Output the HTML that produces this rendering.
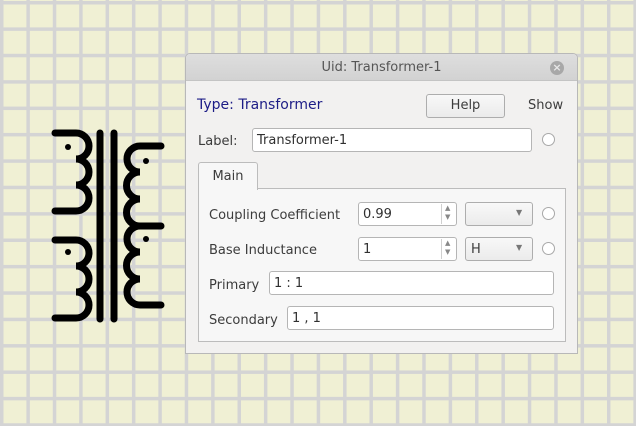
<!DOCTYPE html>
<html><head><style>
*{box-sizing:border-box;margin:0;padding:0}
body{width:636px;height:426px;overflow:hidden;position:relative;font-family:"DejaVu Sans","Liberation Sans",sans-serif;font-size:13px;color:#3c3c3c;
background-color:#f0f0d4;
background-image:linear-gradient(to right,#d4d4d4 0,#d4d4d4 3.5px,transparent 3.5px),linear-gradient(to bottom,#d4d4d4 0,#d4d4d4 3.5px,transparent 3.5px);
background-size:26.4px 26.4px;background-position:0 1px}
.a{position:absolute}
.dlg{left:185px;top:53px;width:393px;height:301px;background:#f2f1f0;border:1px solid #b8b8b8;border-radius:5px 5px 0 0;overflow:hidden}
.tb{left:0;top:0;width:100%;height:27px;background:linear-gradient(#dedede,#d2d2d2);border-bottom:1px solid #c4c4c4;text-align:center;line-height:27px;color:#555;font-size:13px}
.inp{background:#fff;border:1px solid #b5b5b5;border-radius:3px;padding-left:4px;line-height:23px;color:#303030}
.btn{border:1px solid #adadad;border-radius:3px;background:linear-gradient(#f8f8f8,#ebebeb);text-align:center}
.rad{width:13px;height:13px;border:1px solid #a8a8a8;border-radius:50%;background:#fff}
</style></head><body>
<svg class="a" style="left:0;top:0" width="200" height="340" fill="none" stroke="#000" stroke-width="7" stroke-linecap="round">
<path d="M55 133 H76 A13 13 0 0 1 76 159 A13 13 0 0 1 76 185 A13 13 0 0 1 76 211 H55"/>
<path d="M55 240 H76 A13 13 0 0 1 76 266 A13 13 0 0 1 76 292 A13 13 0 0 1 76 318 H55"/>
<path d="M100 133 V319 M114 133 V319"/>
<path d="M161 146 H140 A13 13 0 0 0 140 172 A13 13 0 0 0 140 199 A13 13 0 0 0 140 226 H161"/>
<path d="M140 226 A13 13 0 0 0 140 252 A13 13 0 0 0 140 279 A13 13 0 0 0 140 305 H161"/>
<g fill="#000" stroke="none"><circle cx="68" cy="147" r="3"/><circle cx="68" cy="252" r="3"/><circle cx="146" cy="161" r="3"/><circle cx="146" cy="239" r="3"/></g>
</svg>
<div class="a dlg">
<div class="a tb">Uid: Transformer-1</div>
<div class="a" style="left:364px;top:7px;width:14px;height:14px;border-radius:50%;background:#a8a8a8;color:#e8e8e8;font-size:11px;line-height:14px;text-align:center;font-weight:bold">×</div>
<div class="a" style="left:11px;top:43px;font-size:14px;color:#1c1c86">Type: Transformer</div>
<div class="a btn" style="left:240px;top:40px;width:79px;height:24px;line-height:22px">Help</div>
<div class="a" style="left:342px;top:44px">Show</div>
<div class="a" style="left:12px;top:80px">Label:</div>
<div class="a inp" style="left:66px;top:74px;width:280px;height:24px">Transformer-1</div>
<div class="a rad" style="left:356px;top:79px"></div>
<div class="a" style="left:12px;top:134px;width:368px;height:154px;background:#f7f7f7;border:1px solid #bcbcbc"></div>
<div class="a" style="left:12px;top:108px;width:60px;height:28px;background:#f7f7f7;border:1px solid #bcbcbc;border-bottom:none;border-radius:3px 3px 0 0;text-align:center;line-height:27px">Main</div>
<div class="a" style="left:23px;top:154px">Coupling Coefficient</div>
<div class="a inp" style="left:172px;top:148px;width:99px;height:24px">0.99</div>
<div class="a" style="left:255px;top:150px;width:1px;height:20px;background:#d0d0d0"></div>
<div class="a" style="left:259px;top:150px;font-size:7px;color:#888;line-height:9px">▲<br>▼</div>
<div class="a btn" style="left:279px;top:148px;width:68px;height:24px"></div>
<div class="a" style="left:330px;top:154px;font-size:8px;color:#777">▼</div>
<div class="a rad" style="left:356px;top:153px"></div>
<div class="a" style="left:23px;top:189px">Base Inductance</div>
<div class="a inp" style="left:172px;top:183px;width:99px;height:24px">1</div>
<div class="a" style="left:255px;top:185px;width:1px;height:20px;background:#d0d0d0"></div>
<div class="a" style="left:259px;top:185px;font-size:7px;color:#888;line-height:9px">▲<br>▼</div>
<div class="a btn" style="left:279px;top:183px;width:68px;height:24px;text-align:left;padding-left:5px;line-height:23px">H</div>
<div class="a" style="left:330px;top:189px;font-size:8px;color:#777">▼</div>
<div class="a rad" style="left:356px;top:188px"></div>
<div class="a" style="left:23px;top:224px">Primary</div>
<div class="a inp" style="left:83px;top:217px;width:285px;height:24px">1 : 1</div>
<div class="a" style="left:23px;top:259px">Secondary</div>
<div class="a inp" style="left:101px;top:252px;width:267px;height:24px">1 , 1</div>
</div>
</body></html>
